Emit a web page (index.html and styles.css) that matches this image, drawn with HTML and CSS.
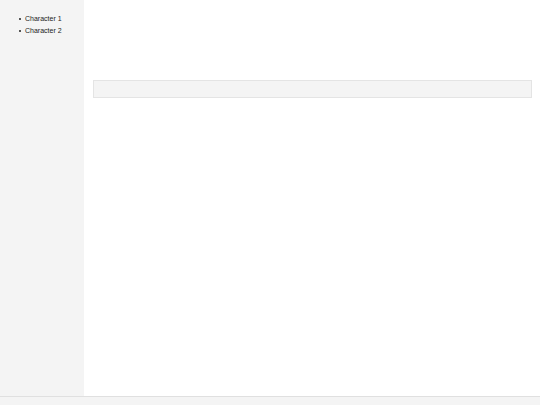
FILE: index.html
```html
<!DOCTYPE html>
<html>
<head>
<meta charset="utf-8">
<link rel="stylesheet" href="styles.css">
</head>
<body>
<div class="app">
  <aside class="sidebar">
    <ul class="char-list">
      <li>Character 1</li>
      <li>Character 2</li>
    </ul>
  </aside>
  <main class="main">
    <div class="panel"></div>
  </main>
</div>
<footer class="footer"></footer>
</body>
</html>
```

FILE: styles.css
```css
html, body {
  margin: 0;
  padding: 0;
  height: 100%;
}
body {
  font-family: "Liberation Sans", Arial, sans-serif;
  background: #ffffff;
  color: #222;
  display: flex;
  flex-direction: column;
}
.app {
  flex: 1;
  display: flex;
  min-height: 0;
}
.sidebar {
  width: 84px;
  background: #f4f4f4;
  flex-shrink: 0;
}
.char-list {
  margin: 0;
  padding: 13px 0 0 19px;
  font-size: 7px;
  line-height: 12px;
  list-style: none;
}
.char-list li {
  display: flex;
  align-items: center;
}
.char-list li::before {
  content: "";
  width: 2px;
  height: 2px;
  border-radius: 50%;
  background: #222;
  margin-right: 4px;
  flex-shrink: 0;
}
.main {
  flex: 1;
  padding: 80px 8px 0 9px;
}
.panel {
  height: 16px;
  background: #f4f4f4;
  border: 1px solid #e4e4e4;
}
.footer {
  height: 8px;
  background: #f4f4f4;
  border-top: 1px solid #e0e0e0;
}
```
